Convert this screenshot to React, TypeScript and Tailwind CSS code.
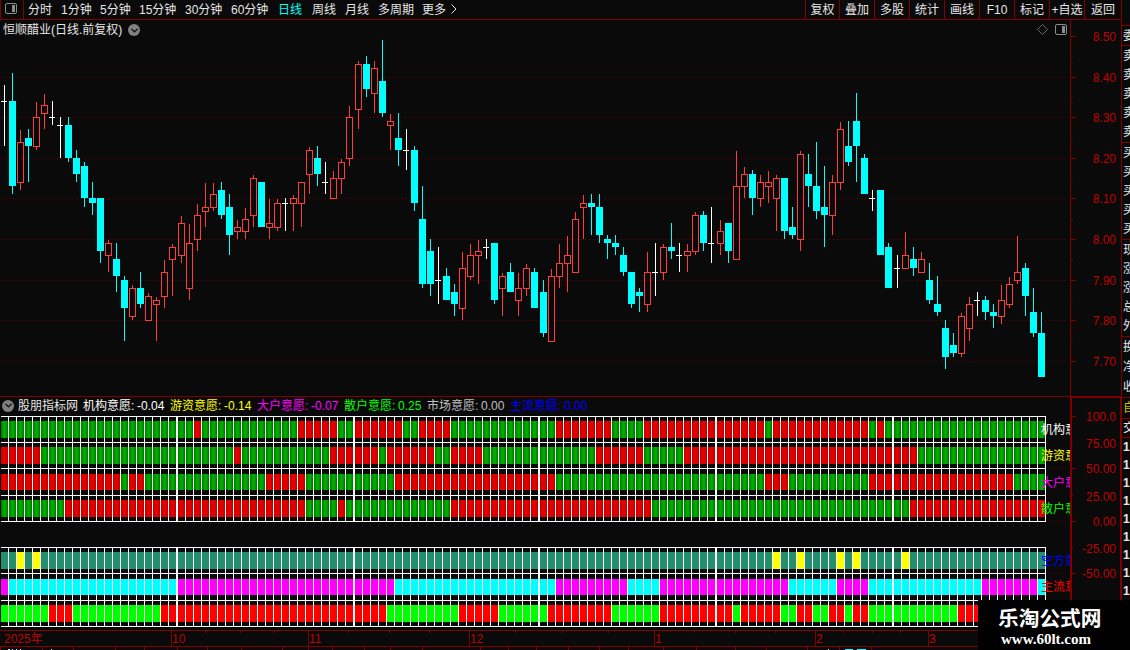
import { ChevronDown } from "lucide-react";

type Candle = [kind: "u" | "d" | "x", high: number, top: number, bottom: number, low: number];

const CANDLES: Candle[] = [
  ["x", 85, 101, 102, 146], ["d", 73, 101, 186, 194], ["u", 130, 142, 183, 190], ["d", 129, 138, 146, 182],
  ["u", 102, 117, 147, 150], ["u", 94, 105, 114, 129], ["x", 101, 117, 118, 125], ["x", 117, 125, 126, 158],
  ["d", 117, 125, 158, 162], ["d", 150, 158, 174, 182], ["d", 162, 166, 198, 207], ["d", 182, 198, 203, 215],
  ["d", 198, 198, 251, 263], ["u", 240, 243, 256, 272], ["d", 243, 259, 276, 292], ["d", 276, 280, 308, 341],
  ["u", 285, 288, 317, 320], ["d", 272, 288, 304, 308], ["u", 293, 296, 321, 321], ["u", 297, 300, 305, 341],
  ["u", 260, 272, 297, 308], ["u", 244, 247, 260, 296], ["u", 216, 223, 256, 263], ["u", 224, 243, 289, 300],
  ["u", 204, 215, 240, 251], ["u", 183, 207, 212, 227], ["u", 183, 194, 208, 211], ["d", 182, 190, 215, 219],
  ["d", 194, 207, 235, 255], ["u", 220, 227, 232, 239], ["u", 208, 219, 232, 239], ["u", 175, 178, 216, 227],
  ["d", 182, 182, 227, 227], ["u", 199, 223, 228, 239], ["u", 199, 203, 228, 231], ["x", 198, 203, 204, 231],
  ["u", 195, 198, 204, 231], ["u", 182, 182, 204, 227], ["u", 147, 150, 175, 194], ["d", 146, 158, 174, 186],
  ["x", 162, 182, 183, 194], ["u", 171, 178, 199, 199], ["u", 159, 162, 179, 194], ["u", 106, 117, 159, 166],
  ["u", 61, 64, 110, 129], ["d", 56, 64, 89, 97], ["u", 61, 68, 94, 113], ["d", 40, 81, 113, 117],
  ["u", 114, 121, 126, 150], ["d", 113, 138, 150, 166], ["x", 129, 150, 151, 170], ["d", 146, 150, 203, 211],
  ["d", 186, 219, 284, 288], ["d", 239, 251, 284, 296], ["x", 247, 280, 281, 304], ["d", 268, 276, 300, 300],
  ["d", 284, 292, 304, 316], ["u", 252, 268, 309, 320], ["u", 244, 255, 277, 280], ["u", 240, 251, 256, 284],
  ["x", 239, 247, 248, 259], ["d", 243, 243, 300, 304], ["u", 273, 276, 289, 316], ["d", 263, 272, 292, 292],
  ["u", 273, 288, 301, 316], ["u", 264, 268, 289, 296], ["d", 268, 272, 308, 308], ["d", 280, 292, 333, 337],
  ["u", 269, 276, 342, 342], ["u", 244, 263, 277, 288], ["u", 236, 255, 264, 292], ["u", 212, 219, 273, 273],
  ["u", 195, 203, 208, 239], ["d", 194, 203, 207, 235], ["d", 194, 207, 235, 243], ["d", 235, 239, 243, 259],
  ["d", 235, 243, 247, 255], ["d", 247, 255, 272, 276], ["d", 272, 272, 304, 308], ["d", 288, 292, 296, 312],
  ["u", 252, 272, 305, 312], ["x", 243, 272, 273, 296], ["u", 244, 247, 273, 280], ["d", 223, 247, 251, 259],
  ["x", 243, 255, 256, 272], ["u", 244, 251, 256, 272], ["u", 212, 215, 252, 255], ["d", 211, 215, 243, 251],
  ["x", 207, 243, 244, 263], ["u", 220, 231, 244, 255], ["d", 223, 223, 251, 263], ["u", 151, 186, 260, 260],
  ["u", 167, 174, 187, 198], ["d", 170, 174, 198, 215], ["u", 175, 182, 199, 207], ["u", 171, 182, 187, 203],
  ["u", 175, 178, 199, 231], ["d", 178, 178, 231, 239], ["d", 207, 227, 235, 239], ["u", 151, 154, 240, 251],
  ["d", 154, 174, 186, 207], ["d", 142, 186, 211, 219], ["d", 166, 207, 215, 247], ["u", 175, 182, 216, 235],
  ["u", 122, 129, 183, 190], ["d", 121, 146, 162, 166], ["d", 93, 121, 146, 182], ["d", 154, 158, 194, 194],
  ["x", 190, 198, 199, 211], ["d", 190, 190, 255, 255], ["d", 243, 247, 288, 288], ["x", 255, 268, 269, 288],
  ["u", 232, 255, 269, 269], ["d", 247, 259, 268, 276], ["u", 252, 259, 273, 273], ["d", 263, 280, 300, 304],
  ["d", 276, 304, 312, 316], ["d", 320, 328, 357, 369], ["d", 333, 345, 353, 357], ["u", 313, 316, 354, 357],
  ["u", 297, 304, 329, 341], ["x", 292, 300, 301, 316], ["d", 296, 300, 312, 320], ["d", 304, 312, 316, 328],
  ["u", 285, 300, 317, 324], ["u", 277, 284, 305, 308], ["u", 236, 272, 281, 284], ["d", 263, 268, 296, 316],
  ["d", 288, 312, 333, 337], ["d", 312, 333, 377, 377],
];

// every 22nd bar or so the 8px pitch takes one pixel more
const WIDE_STEPS = [22, 44, 67, 89, 111];
const centerOf = (i: number) => 4 + 8 * i + WIDE_STEPS.filter((s) => i >= s).length;

const FILLS: Record<string, string> = {
  G: "url(#green)",
  R: "url(#red)",
  T: "#248f6c",
  Y: "#ffff00",
  M: "#ff00ff",
  C: "#00ffff",
  g: "#00ff00",
  r: "#ff0000",
};

const STRIPS = [
  { y: 421, h: 17, runs: "G24 R1 G12 R5 G2 R6 G2 R4 G13 R7 G4 R15 G1 R12 G1 R1 G20", label: "机构意愿", color: "#ffffff", labelY: 434 },
  { y: 447, h: 17, runs: "R5 G24 R1 G11 R6 G1 R6 G2 R4 G14 R6 G5 R29 G16", label: "游资意愿", color: "#ffff00", labelY: 460 },
  { y: 474, h: 16, runs: "R15 G1 R2 G15 R5 G11 R20 G26 R3 G10 R18 G4", label: "大户意愿", color: "#ff00ff", labelY: 487 },
  { y: 500, h: 17, runs: "G8 R30 G4 R1 G13 R25 G32 R17", label: "散户意愿", color: "#00ff00", labelY: 513 },
  { y: 552, h: 17, runs: "T2 Y1 T1 Y1 T91 Y1 T2 Y1 T4 Y1 T1 Y1 T5 Y1 T17", label: "空方意愿", color: "#0000ff", labelY: 565 },
  { y: 579, h: 16, runs: "M1 C21 M27 C20 M9 C4 M16 C6 M4 C14 M7 C1", label: "主流意愿", color: "#ff0000", labelY: 591 },
  { y: 605, h: 17, runs: "g6 r3 g11 r28 g9 r5 g6 r8 g6 r9 g1 r5 g2 r2 g2 r2 g1 r2 g11 r11", label: "", color: "", labelY: 0 },
];

const expand = (runs: string) =>
  runs.split(" ").flatMap((run) => Array<string>(Number(run.slice(1))).fill(FILLS[run[0]]));

const PERIODS = [
  { text: "分时", cls: "w-[33px]" },
  { text: "1分钟", cls: "w-[39px]" },
  { text: "5分钟", cls: "w-[39px]" },
  { text: "15分钟", cls: "w-[46px]" },
  { text: "30分钟", cls: "w-[46px]" },
  { text: "60分钟", cls: "w-[47px]" },
  { text: "日线", cls: "w-[34px] text-[#00ffff]" },
  { text: "周线", cls: "w-[33px]" },
  { text: "月线", cls: "w-[33px]" },
  { text: "多周期", cls: "w-[44px]" },
  { text: "更多", cls: "w-[29px]" },
];

const ACTIONS = ["复权", "叠加", "多股", "统计", "画线", "F10", "标记", "+自选", "返回"];

const LEGEND = [
  { name: "机构意愿:", value: "-0.04", cls: "w-[87px] text-white" },
  { name: "游资意愿:", value: "-0.14", cls: "w-[87px] text-[#ffff00]" },
  { name: "大户意愿:", value: "-0.07", cls: "w-[87px] text-[#ff00ff]" },
  { name: "散户意愿:", value: "0.25", cls: "w-[83px] text-[#00ff00]" },
  { name: "市场意愿:", value: "0.00", cls: "w-[83px] text-[#c0c0c0]" },
  { name: "主流意愿:", value: "0.00", cls: "w-[83px] text-[#0000ff]" },
];

const PRICE_TICKS: [number, string][] = [
  [36, "8.50"], [77, "8.40"], [117, "8.30"], [158, "8.20"], [198, "8.10"],
  [239, "8.00"], [280, "7.90"], [320, "7.80"], [361, "7.70"],
];
const PRICE_MINOR = [57, 97, 138, 178, 219, 260, 301, 341];

const LEVEL_TICKS: [number, string][] = [
  [416, "100.0"], [443, "75.00"], [468, "50.00"], [496, "25.00"], [521, "0.00"], [548, "-25.00"], [573, "-50.00"],
];

const MONTHS: [number, string][] = [[171, "10"], [308, "11"], [469, "12"], [654, "1"], [815, "2"], [928, "3"]];
const WEEK_TICKS = [205, 240, 274, 348, 389, 429, 515, 562, 608, 694, 735, 775, 843, 872, 900];
const LOWER_TICKS = [
  0, 42, 73, 115, 144, 177, 207, 241, 282, 308, 332, 364, 390, 422, 480, 508, 536, 568, 599, 628, 663, 696, 735, 766, 807,
  839, 871,
];

function PanelIcon() {
  return (
    <svg width="12" height="11" viewBox="0 0 12 11" className="shrink-0">
      <rect x="0.5" y="0.5" width="11" height="10" rx="1.5" fill="none" stroke="#8c8c8c" />
      <rect x="7" y="2" width="3" height="7" fill="#8c8c8c" />
    </svg>
  );
}

function RoundChevron() {
  return (
    <span className="flex size-3 shrink-0 items-center justify-center rounded-full bg-[#808080] text-[#0a0a0a]">
      <ChevronDown size={11} strokeWidth={3} />
    </span>
  );
}

function TopBar() {
  return (
    <header className="flex h-5 shrink-0 border-b border-l border-[#800000] text-[#e6e6e6]">
      <div className="flex w-[23px] items-start border-r border-[#800000] pl-1 pt-[3px]">
        <PanelIcon />
      </div>
      <nav className="flex grow items-center pl-1">
        {PERIODS.map((p) => (
          <span key={p.text} className={`shrink-0 ${p.cls}`}>
            {p.text}
          </span>
        ))}
        <svg width="6" height="10" viewBox="0 0 6 10" className="mb-0.5 shrink-0">
          <path d="M0.5 0.5 5 5 0.5 9.5" fill="none" stroke="#e6e6e6" />
        </svg>
      </nav>
      <div className="flex">
        {ACTIONS.map((a, i) => (
          <span
            key={a}
            className={`flex items-center justify-center border-l border-[#800000] ${
              i === 0 ? "w-[34px]" : i === 8 ? "w-[37px]" : "w-[35px]"
            }`}
          >
            {a}
          </span>
        ))}
      </div>
    </header>
  );
}

function CandleMark({ candle, index }: { candle: Candle; index: number }) {
  const [kind, high, top, bottom, low] = candle;
  const c = centerOf(index);
  if (kind === "u") {
    return (
      <g fill="#ff3c3c">
        {top > high && <rect x={c} y={high} width={1} height={top - high} />}
        {low > bottom && <rect x={c} y={bottom} width={1} height={low - bottom} />}
        <rect x={c - 2.5} y={top + 0.5} width={6} height={bottom - top - 1} fill="none" stroke="#ff3c3c" />
      </g>
    );
  }
  return (
    <g fill={kind === "d" ? "#00ffff" : "#ffffff"}>
      <rect x={c} y={high} width={1} height={low - high} />
      <rect x={c - 3} y={top} width={kind === "d" ? 7 : 6} height={bottom - top} />
    </g>
  );
}

function PriceChart() {
  return (
    <section className="relative h-[377px] shrink-0">
      <svg width="1121" height="377" viewBox="0 20 1121 377" shapeRendering="crispEdges" className="block">
        {PRICE_TICKS.slice(1).map(([y]) => (
          <line key={y} x1={1} x2={1067} y1={y + 0.5} y2={y + 0.5} stroke="#780000" strokeDasharray="1 3" />
        ))}
        {CANDLES.map((candle, i) => (
          <CandleMark key={i} candle={candle} index={i} />
        ))}
        <g fill="#800000">
          <rect x={1070} y={20} width={1} height={377} />
          <rect x={0} y={396} width={1121} height={1} />
          {PRICE_TICKS.map(([y]) => (
            <rect key={y} x={1071} y={y} width={5} height={1} />
          ))}
          {PRICE_MINOR.map((y) => (
            <rect key={y} x={1071} y={y} width={2} height={1} />
          ))}
        </g>
        <g fill="#c00000" textAnchor="end">
          {PRICE_TICKS.map(([y, text]) => (
            <text key={y} x={1116} y={y + 5}>
              {text}
            </text>
          ))}
        </g>
      </svg>
      <div className="absolute left-[3px] top-px flex h-[18px] items-center gap-[6px] text-[#e6e6e6]">
        <span>恒顺醋业(日线.前复权)</span>
        <RoundChevron />
      </div>
      <div className="absolute right-[54px] top-0 flex h-[18px] items-center gap-[7px]">
        <svg width="11" height="11" viewBox="0 0 11 11">
          <path d="M5.5 0.5 10.5 5.5 5.5 10.5 0.5 5.5Z" fill="none" stroke="#808080" strokeWidth="0.8" />
        </svg>
        <PanelIcon />
      </div>
    </section>
  );
}

function StripGrid({ top, bottom, lines }: { top: number; bottom: number; lines: number[] }) {
  return (
    <g fill="#ffffff">
      {lines.map((y) => (
        <rect key={y} x={1} y={y} width={1045} height={1} />
      ))}
      {CANDLES.map((_, i) => {
        const x = centerOf(i) + 4;
        const next = i < 129 ? centerOf(i + 1) - 3 : x + 1;
        return <rect key={i} x={x} y={top} width={next - x} height={bottom - top} />;
      })}
    </g>
  );
}

function IndicatorChart() {
  return (
    <section className="relative h-[253px] shrink-0">
      <svg width="1121" height="253" viewBox="0 397 1121 253" shapeRendering="crispEdges" className="block">
        <defs>
          <linearGradient id="green">
            <stop offset="0" stopColor="#007800" />
            <stop offset="0.45" stopColor="#00b000" />
            <stop offset="0.65" stopColor="#00a800" />
            <stop offset="1" stopColor="#007000" />
          </linearGradient>
          <linearGradient id="red">
            <stop offset="0" stopColor="#b80000" />
            <stop offset="0.35" stopColor="#e60000" />
            <stop offset="0.7" stopColor="#e00000" />
            <stop offset="1" stopColor="#b40000" />
          </linearGradient>
          <clipPath id="plot">
            <rect x="0" y="397" width="1070" height="253" />
          </clipPath>
        </defs>
        {[468, 521, 573].map((y) => (
          <line key={y} x1={1049} x2={1067} y1={y + 0.5} y2={y + 0.5} stroke="#780000" strokeDasharray="1 3" />
        ))}
        <StripGrid top={416} bottom={522} lines={[416, 442, 468, 495, 521]} />
        <StripGrid top={547} bottom={627} lines={[547, 573, 600, 626]} />
        {STRIPS.map((s) =>
          expand(s.runs).map((fill, i) => (
            <rect key={`${s.y}-${i}`} x={centerOf(i) - 3} y={s.y} width={7} height={s.h} fill={fill} />
          )),
        )}
        <g clipPath="url(#plot)">
          {STRIPS.map((s) => (
            <text key={s.y} x={1041} y={s.labelY} fill={s.color}>
              {s.label}
            </text>
          ))}
        </g>
        <g fill="#800000">
          <rect x={1070} y={397} width={2} height={253} />
          <rect x={1070} y={397} width={51} height={1} />
          <rect x={1120} y={397} width={1} height={253} />
          {LEVEL_TICKS.map(([y], i) => (
            <rect key={y} x={1072} y={i % 2 ? y - 1 : y} width={i % 2 ? 1 : 4} height={1} />
          ))}
          <rect x={0} y={630} width={1070} height={1} />
          <rect x={0} y={646} width={1070} height={1} />
          {MONTHS.map(([x]) => (
            <rect key={x} x={x} y={631} width={1} height={15} />
          ))}
          {WEEK_TICKS.map((x) => (
            <rect key={x} x={x} y={631} width={1} height={2} />
          ))}
          {LOWER_TICKS.map((x) => (
            <rect key={x} x={x} y={647} width={1} height={3} />
          ))}
        </g>
        <g fill="#c00000">
          {LEVEL_TICKS.map(([y, text]) => (
            <text key={y} x={1116} y={y + 5} textAnchor="end">
              {text}
            </text>
          ))}
          <text x={4} y={643}>
            2025年
          </text>
          {MONTHS.map(([x, text]) => (
            <text key={x} x={x + 1} y={643}>
              {text}
            </text>
          ))}
        </g>
        <g fill="#e6e6e6">
          <rect x={8} y={649} width={2} height={1} />
          <rect x={12} y={649} width={1} height={1} />
          <rect x={16} y={649} width={1} height={1} />
          <rect x={20} y={649} width={1} height={1} />
          <rect x={51} y={649} width={1} height={1} />
          <rect x={828} y={649} width={1} height={1} />
        </g>
        <rect x={845} y={649} width={8} height={1} fill="#00ffff" />
        <rect x={857} y={649} width={9} height={1} fill="#00ffff" />
      </svg>
      <div className="absolute left-0.5 top-0 flex h-[17px] items-center whitespace-nowrap">
        <RoundChevron />
        <span className="ml-1 w-[65px] text-[#e6e6e6]">股朋指标网</span>
        {LEGEND.map((l) => (
          <span key={l.name} className={`flex ${l.cls}`}>
            <span className="w-[54px]">{l.name}</span>
            <span>{l.value}</span>
          </span>
        ))}
      </div>
    </section>
  );
}

function QuoteRows({ items, cls }: { items: string[]; cls: string }) {
  return (
    <div className={`flex shrink-0 flex-col justify-around overflow-hidden border-b border-[#800000] pl-px ${cls}`}>
      {items.map((t, i) => (
        <span key={i} className="w-3 leading-[18px]">
          {t}
        </span>
      ))}
    </div>
  );
}

function QuoteColumn() {
  return (
    <aside className="flex w-[9px] shrink-0 flex-col overflow-hidden border-l border-[#800000] text-[#e6e6e6]">
      <div className="h-[26px] shrink-0 border-b border-[#800000]" />
      <QuoteRows items={["委"]} cls="h-5" />
      <QuoteRows items={["卖", "卖", "卖", "卖", "卖"]} cls="h-[97px]" />
      <QuoteRows items={["买", "买", "买", "买", "买"]} cls="h-[97px]" />
      <QuoteRows items={["现", "涨", "涨", "总", "外"]} cls="h-[97px]" />
      <QuoteRows items={["换", "净", "收"]} cls="h-[61px]" />
      <QuoteRows items={["自"]} cls="h-[21px] text-[#c0c000]" />
      <QuoteRows items={["交"]} cls="h-[19px]" />
      <div className="flex flex-col pl-px font-bold">
        {Array.from({ length: 10 }, (_, i) => (
          <span key={i} className="h-[18px] leading-[18px]">
            1
          </span>
        ))}
      </div>
    </aside>
  );
}

export default function App() {
  return (
    <div className="relative flex h-[650px] w-[1130px] overflow-hidden bg-[#0a0a0a] font-['Liberation_Sans','Noto_Sans_CJK_SC',sans-serif] text-[12px] leading-[18px]">
      <main className="flex w-[1121px] shrink-0 flex-col">
        <TopBar />
        <PriceChart />
        <IndicatorChart />
      </main>
      <QuoteColumn />
      <div className="absolute bottom-0 right-0 flex h-[50px] w-[152px] flex-col bg-black pl-5 pt-[6px] text-white">
        <span className="text-[20.7px] font-bold leading-[26px]">乐淘公式网</span>
        <span className="pl-[3px] font-['Liberation_Serif',serif] text-[15px] font-bold leading-[14px]">
          www.60lt.com
        </span>
      </div>
    </div>
  );
}
